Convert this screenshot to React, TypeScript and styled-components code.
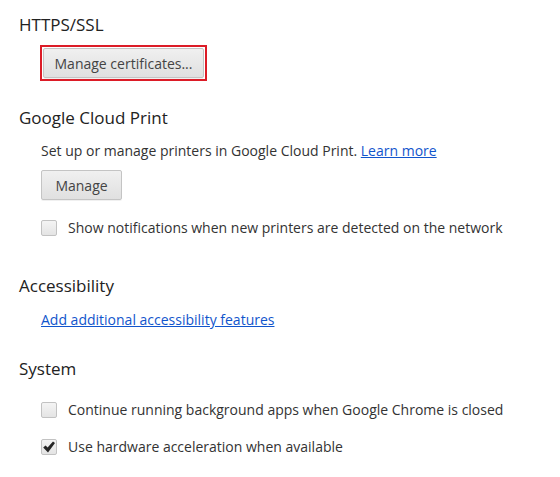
import styled, { createGlobalStyle } from "styled-components";

const Global = createGlobalStyle`
    body {
        margin: 0;
        background: #fff;
        font-family: "Open Sans", "Noto Sans", sans-serif;
        color: #333;
    }
`

const Page = styled.div`
    width: 560px;
    height: 477px;
    padding: 14px 0 0 19px;
    box-sizing: border-box;
    display: flex;
    flex-direction: column;
`

const Section = styled.section<{ $gap: number }>`
    display: flex;
    flex-direction: column;
    margin-bottom: ${props => props.$gap}px;
`

const Heading = styled.h3`
    margin: 0;
    font-size: 17px;
    font-weight: 400;
    line-height: 22px;
    color: #222;
`

const Body = styled.div`
    display: flex;
    flex-direction: column;
    align-items: flex-start;
    padding-left: 22px;
`

const Text = styled.div<{ $top: number }>`
    font-size: 14px;
    line-height: 20px;
    margin-top: ${props => props.$top}px;
`

const Link = styled.a`
    color: #1155cc;
    text-decoration: underline;
    cursor: pointer;
`

const Highlight = styled.div`
    margin-top: 9px;
    margin-left: -1px;
    border: 2px solid #dc1c27;
    padding: 1px;
    display: flex;
`

const Button = styled.button<{ $w: number; $top?: number }>`
    width: ${props => props.$w}px;
    height: 30px;
    margin-top: ${props => props.$top || 0}px;
    border: 1px solid #c4c4c4;
    border-radius: 2px;
    background: linear-gradient(#f0f0f0, #e0e0e0);
    box-shadow: 0 1px 0 rgba(0, 0, 0, 0.06);
    font-family: inherit;
    font-size: 14px;
    color: #444;
    padding: 0;
`

const Row = styled.label<{ $top: number }>`
    display: flex;
    align-items: center;
    gap: 11px;
    font-size: 14px;
    line-height: 20px;
    margin-top: ${props => props.$top}px;
`

const Box = styled.span`
    width: 16px;
    height: 16px;
    box-sizing: border-box;
    border: 1px solid #c2c2c2;
    border-radius: 2px;
    background: linear-gradient(#f4f4f4, #e4e4e4);
    display: flex;
    align-items: center;
    justify-content: center;
`

function Check({ on }: { on?: boolean }) {
    return (
        <Box>
            {on && (
                <svg width="14" height="14" viewBox="0 0 14 14">
                    <path d="M1.2 7.6 L3.6 5.4 L5.6 7.6 L11 1.4 L13 3 L6 12.4 Z" fill="#262626" />
                </svg>
            )}
        </Box>
    )
}

export default function App() {
    return (
        <Page>
            <Global />
            <Section $gap={26}>
                <Heading>HTTPS/SSL</Heading>
                <Body>
                    <Highlight>
                        <Button $w={161}>Manage certificates...</Button>
                    </Highlight>
                </Body>
            </Section>
            <Section $gap={37}>
                <Heading>Google Cloud Print</Heading>
                <Body>
                    <Text $top={12}>Set up or manage printers in Google Cloud Print. <Link>Learn more</Link></Text>
                    <Button $w={81} $top={9}>Manage</Button>
                    <Row $top={18}><Check />Show notifications when new printers are detected on the network</Row>
                </Body>
            </Section>
            <Section $gap={28}>
                <Heading>Accessibility</Heading>
                <Body>
                    <Text $top={13}><Link>Add additional accessibility features</Link></Text>
                </Body>
            </Section>
            <Section $gap={0}>
                <Heading>System</Heading>
                <Body>
                    <Row $top={20}><Check />Continue running background apps when Google Chrome is closed</Row>
                    <Row $top={17}><Check on />Use hardware acceleration when available</Row>
                </Body>
            </Section>
        </Page>
    )
}
